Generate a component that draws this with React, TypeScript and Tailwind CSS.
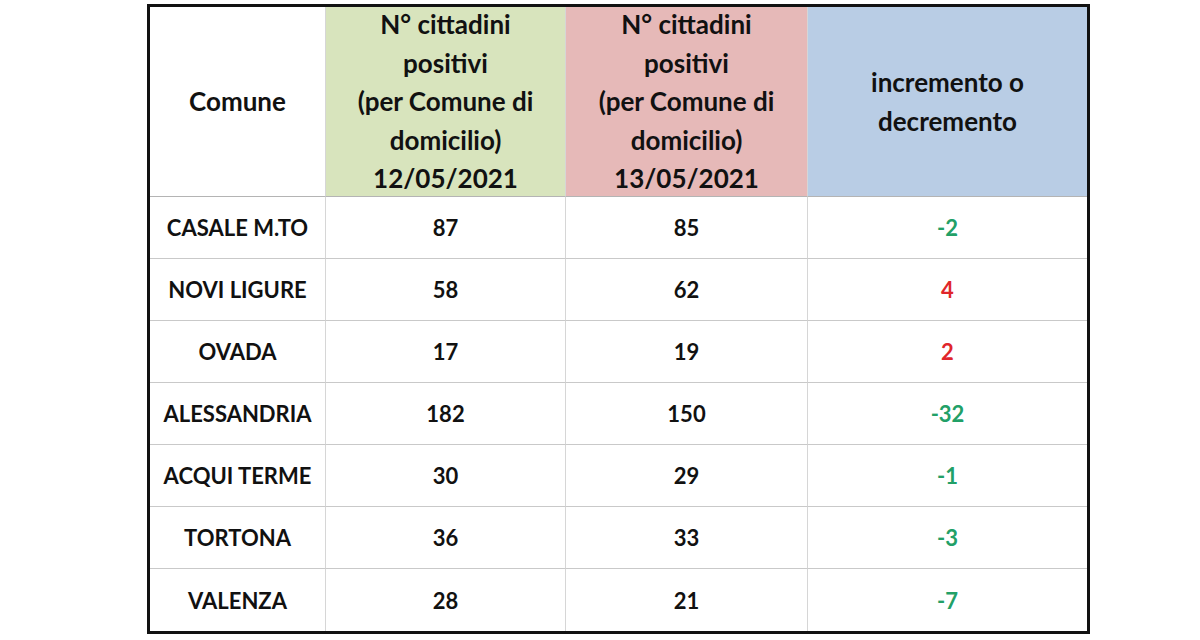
const rows = [
  { comune: "CASALE M.TO", a: 87, b: 85, d: -2 },
  { comune: "NOVI LIGURE", a: 58, b: 62, d: 4 },
  { comune: "OVADA", a: 17, b: 19, d: 2 },
  { comune: "ALESSANDRIA", a: 182, b: 150, d: -32 },
  { comune: "ACQUI TERME", a: 30, b: 29, d: -1 },
  { comune: "TORTONA", a: 36, b: 33, d: -3 },
  { comune: "VALENZA", a: 28, b: 21, d: -7 },
];

function HeaderCell({ bg, children, last }: { bg: string; children: React.ReactNode; last?: boolean }) {
  return (
    <div
      className={`flex h-[190px] items-center justify-center border-b border-[#b4b4b4] text-center text-[26px] leading-[38.5px] ${bg} ${
        last ? "" : "border-r border-r-[#d6d6d6]"
      }`}
    >
      <div>{children}</div>
    </div>
  );
}

function Cell({ children, last, bottom, className = "" }: { children: React.ReactNode; last?: boolean; bottom?: boolean; className?: string }) {
  return (
    <div
      className={`flex h-[62px] items-center justify-center text-[22px] ${className} ${last ? "" : "border-r border-[#d6d6d6]"} ${
        bottom ? "" : "border-b border-b-[#c9c9c9]"
      }`}
    >
      {children}
    </div>
  );
}

export default function App() {
  return (
    <div className="h-[640px] w-[1200px] bg-white pl-[147px] pt-[4px] font-[Lato,sans-serif] font-bold text-[#111111]">
      <div className="grid w-[943px] grid-cols-[176px_240px_242px_279px] border-[3px] border-[#121212]">
        <HeaderCell bg="bg-white">Comune</HeaderCell>
        <HeaderCell bg="bg-[#d8e4bd]">
          N° cittadini
          <br />
          positivi
          <br />
          (per Comune di
          <br />
          domicilio)
          <br />
          12/05/2021
        </HeaderCell>
        <HeaderCell bg="bg-[#e6b9b8]">
          N° cittadini
          <br />
          positivi
          <br />
          (per Comune di
          <br />
          domicilio)
          <br />
          13/05/2021
        </HeaderCell>
        <HeaderCell bg="bg-[#b9cde5]" last>
          incremento o
          <br />
          decremento
        </HeaderCell>

        {rows.map((r, i) => {
          const bottom = i === rows.length - 1;
          return [
            <Cell key={r.comune + "c"} bottom={bottom}>
              {r.comune}
            </Cell>,
            <Cell key={r.comune + "a"} bottom={bottom}>
              {r.a}
            </Cell>,
            <Cell key={r.comune + "b"} bottom={bottom}>
              {r.b}
            </Cell>,
            <Cell
              key={r.comune + "d"}
              bottom={bottom}
              last
              className={r.d < 0 ? "text-[#22a067]" : "text-[#e0262b]"}
            >
              {r.d}
            </Cell>,
          ];
        })}
      </div>
    </div>
  );
}
